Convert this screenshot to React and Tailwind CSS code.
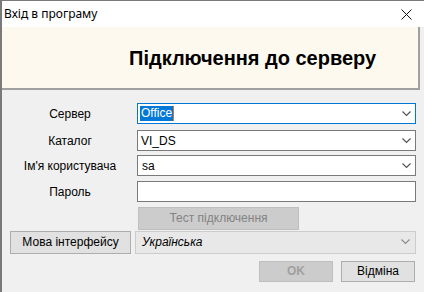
const Chevron = ({ color = '#505050' }) => (
	<svg width="9" height="6" viewBox="0 0 9 6" className="shrink-0">
		<polyline points="0.5,0.5 4.5,4.5 8.5,0.5" fill="none" stroke={color} strokeWidth="1.1" />
	</svg>
);

const Row = ({ label, children, className = '' }) => (
	<div className={`flex items-center ${className}`}>
		<div className="w-[135px] pl-[13px] pr-[12px] text-center text-[12px] text-black">{label}</div>
		{children}
	</div>
);

const Combo = ({ children, focused }) => (
	<div
		className={`w-[279px] h-[21px] bg-white border flex items-center pl-[2px] pr-[4px] ${
			focused ? 'border-[#0078d7]' : 'border-[#7a7a7a]'
		}`}
	>
		<div className="flex-1 flex items-center text-[12px] text-black">{children}</div>
		<Chevron />
	</div>
);

export default function App() {
	return (
		<div
			className="w-[424px] h-[292px] bg-[#f0f0f0] flex flex-col border-l-2 border-t border-[#7a7a7a] overflow-hidden"
			style={{ fontFamily: '"Liberation Sans", Arial, sans-serif' }}
		>
			<div className="h-[26px] bg-white flex items-center justify-between pl-[2px] pr-[12px]">
				<span className="text-[12px] text-black" style={{ fontFamily: '"Noto Sans", sans-serif' }}>
					Вхід в програму
				</span>
				<svg width="11" height="11" viewBox="0 0 11 11">
					<path d="M0.5 0.5 L10.5 10.5 M10.5 0.5 L0.5 10.5" stroke="#111" strokeWidth="1" />
				</svg>
			</div>

			<div className="h-[63px] mr-[4px] bg-[#fdf9ee] border-r-2 border-b-2 border-[#a0a0a0] flex items-center pl-[127px]">
				<span className="text-[20px] font-bold text-black">Підключення до серверу</span>
			</div>

			<Row label="Сервер" className="mt-[13px]">
				<Combo focused>
					<span className="bg-[#0078d7] text-white leading-[15px] px-px">Office</span>
					<span className="w-px h-[15px] bg-[#e0701a]" />
				</Combo>
			</Row>

			<Row label="Каталог" className="mt-[6px]">
				<Combo>
					<span className="pl-px">VI_DS</span>
				</Combo>
			</Row>

			<Row label="Ім'я користувача" className="mt-[4px]">
				<Combo>
					<span className="pl-[2px]">sa</span>
				</Combo>
			</Row>

			<Row label="Пароль" className="mt-[5px]">
				<div className="w-[279px] h-[21px] bg-white border border-[#7a7a7a]" />
			</Row>

			<div className="mt-[3px] pl-[136px]">
				<button className="w-[161px] h-[23px] bg-[#cccccc] border border-[#bfbfbf] text-[12px] text-[#838383]">
					Тест підключення
				</button>
			</div>

			<div className="mt-px flex items-center pl-[8px]">
				<button className="w-[121px] h-[23px] bg-[#e1e1e1] border border-[#adadad] text-[12px] text-black">
					Мова інтерфейсу
				</button>
				<div className="ml-[4px] w-[281px] h-[23px] bg-[#e8e8e8] border border-[#cccccc] flex items-center pl-[6px] pr-[5px]">
					<span className="flex-1 text-[12px] italic text-black">Українська</span>
					<Chevron color="#8a8a8a" />
				</div>
			</div>

			<div className="mt-[7px] flex justify-end gap-[8px] pr-[9px]">
				<button className="w-[74px] h-[21px] bg-[#cccccc] border border-[#bfbfbf] text-[12px] font-bold text-[#a0a0a0]">
					OK
				</button>
				<button className="w-[74px] h-[21px] bg-[#e1e1e1] border border-[#adadad] text-[12px] text-black">
					Відміна
				</button>
			</div>
		</div>
	);
}
